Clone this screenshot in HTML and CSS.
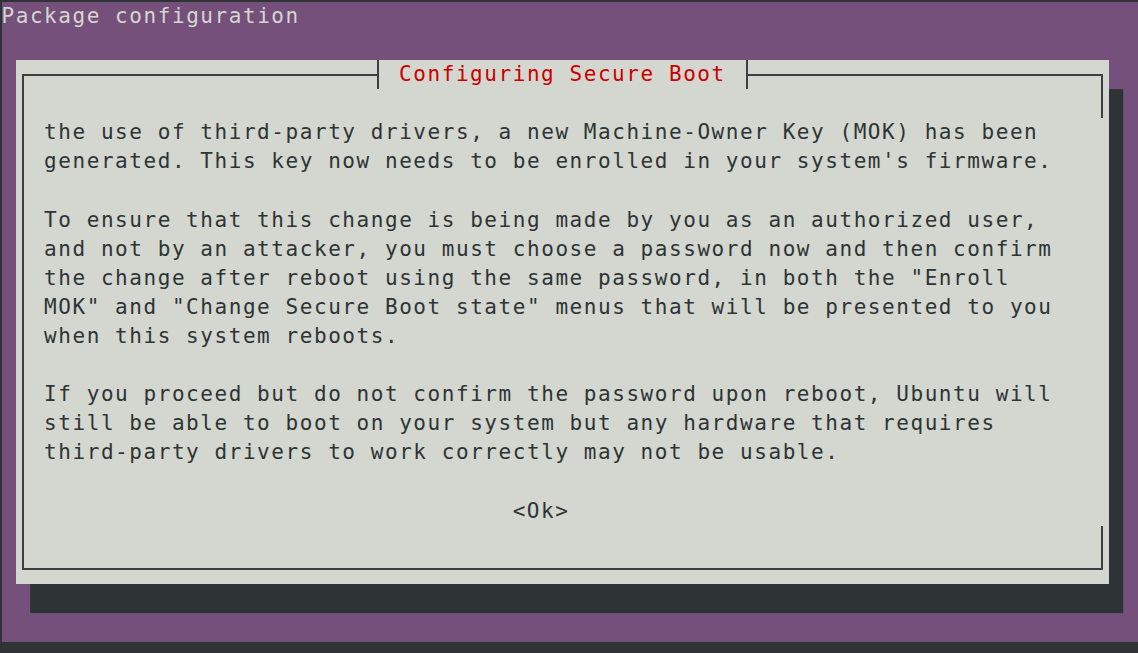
FILE: index.html
```html
<!DOCTYPE html>
<html lang="en">
<head>
<meta charset="utf-8">
<title>Package configuration</title>
<link rel="stylesheet" href="styles.css">
</head>
<body>
<div class="term">
  <div class="header">Package configuration</div>
  <div class="dialog">
    <div class="frame">
      <div class="title">Configuring Secure Boot</div>
      <div class="body">
        <div class="para">the use of third-party drivers, a new Machine-Owner Key (MOK) has been
generated. This key now needs to be enrolled in your system's firmware.</div>
        <div class="para">To ensure that this change is being made by you as an authorized user,
and not by an attacker, you must choose a password now and then confirm
the change after reboot using the same password, in both the "Enroll
MOK" and "Change Secure Boot state" menus that will be presented to you
when this system reboots.</div>
        <div class="para">If you proceed but do not confirm the password upon reboot, Ubuntu will
still be able to boot on your system but any hardware that requires
third-party drivers to work correctly may not be usable.</div>
        <div class="buttons"><span class="btn">&lt;Ok&gt;</span></div>
      </div>
    </div>
  </div>
</div>
</body>
</html>
```

FILE: styles.css
```css
html, body {
  margin: 0;
  padding: 0;
}
body {
  background: #2e3436;
  width: 1138px;
  height: 653px;
  overflow: hidden;
  font-family: "DejaVu Sans Mono", "Liberation Mono", monospace;
  font-size: 21px;
  letter-spacing: 1.56px;
  line-height: 29.1px;
}
.term {
  margin: 2px 0 0 1.5px;
  width: 1136px;
  height: 640.2px;
  background: #75507b;
  display: flex;
  flex-direction: column;
}
.header {
  height: 29.1px;
  color: #d3d7cf;
  white-space: pre;
}
.dialog {
  margin-top: 29.1px;
  margin-left: 14.2px;
  width: 1093.4px;
  height: 523.8px;
  box-sizing: border-box;
  padding: 13.55px 6.1px;
  background: #d3d7cf;
  box-shadow: 14.2px 29.1px 0 0 #2e3436;
}
.frame {
  position: relative;
  height: 100%;
  box-sizing: border-box;
  border: 2px solid #3b4042;
  border-right: none;
}
.frame::before,
.frame::after {
  content: "";
  position: absolute;
  right: 0;
  width: 2px;
  height: 44.65px;
  background: #3b4042;
}
.frame::before { top: -2px; }
.frame::after { bottom: -2px; }
.title {
  position: absolute;
  left: 353px;
  top: -15.55px;
  height: 29.1px;
  padding: 0 20.3px;
  background: #d3d7cf;
  border-left: 2px solid #3b4042;
  border-right: 2px solid #3b4042;
  color: #cc0000;
  white-space: pre;
}
.title::before,
.title::after {
  content: "";
  position: absolute;
  top: 13.55px;
  width: 1px;
  height: 2px;
}
.body {
  padding: 42.65px 0 0 20.3px;
  color: #2e3436;
}
.para {
  white-space: pre;
  margin-bottom: 29.1px;
}
.buttons {
  margin-top: 29.1px;
  padding-left: 468.6px;
  white-space: pre;
}
.btn {
  color: #2e3436;
}
```
